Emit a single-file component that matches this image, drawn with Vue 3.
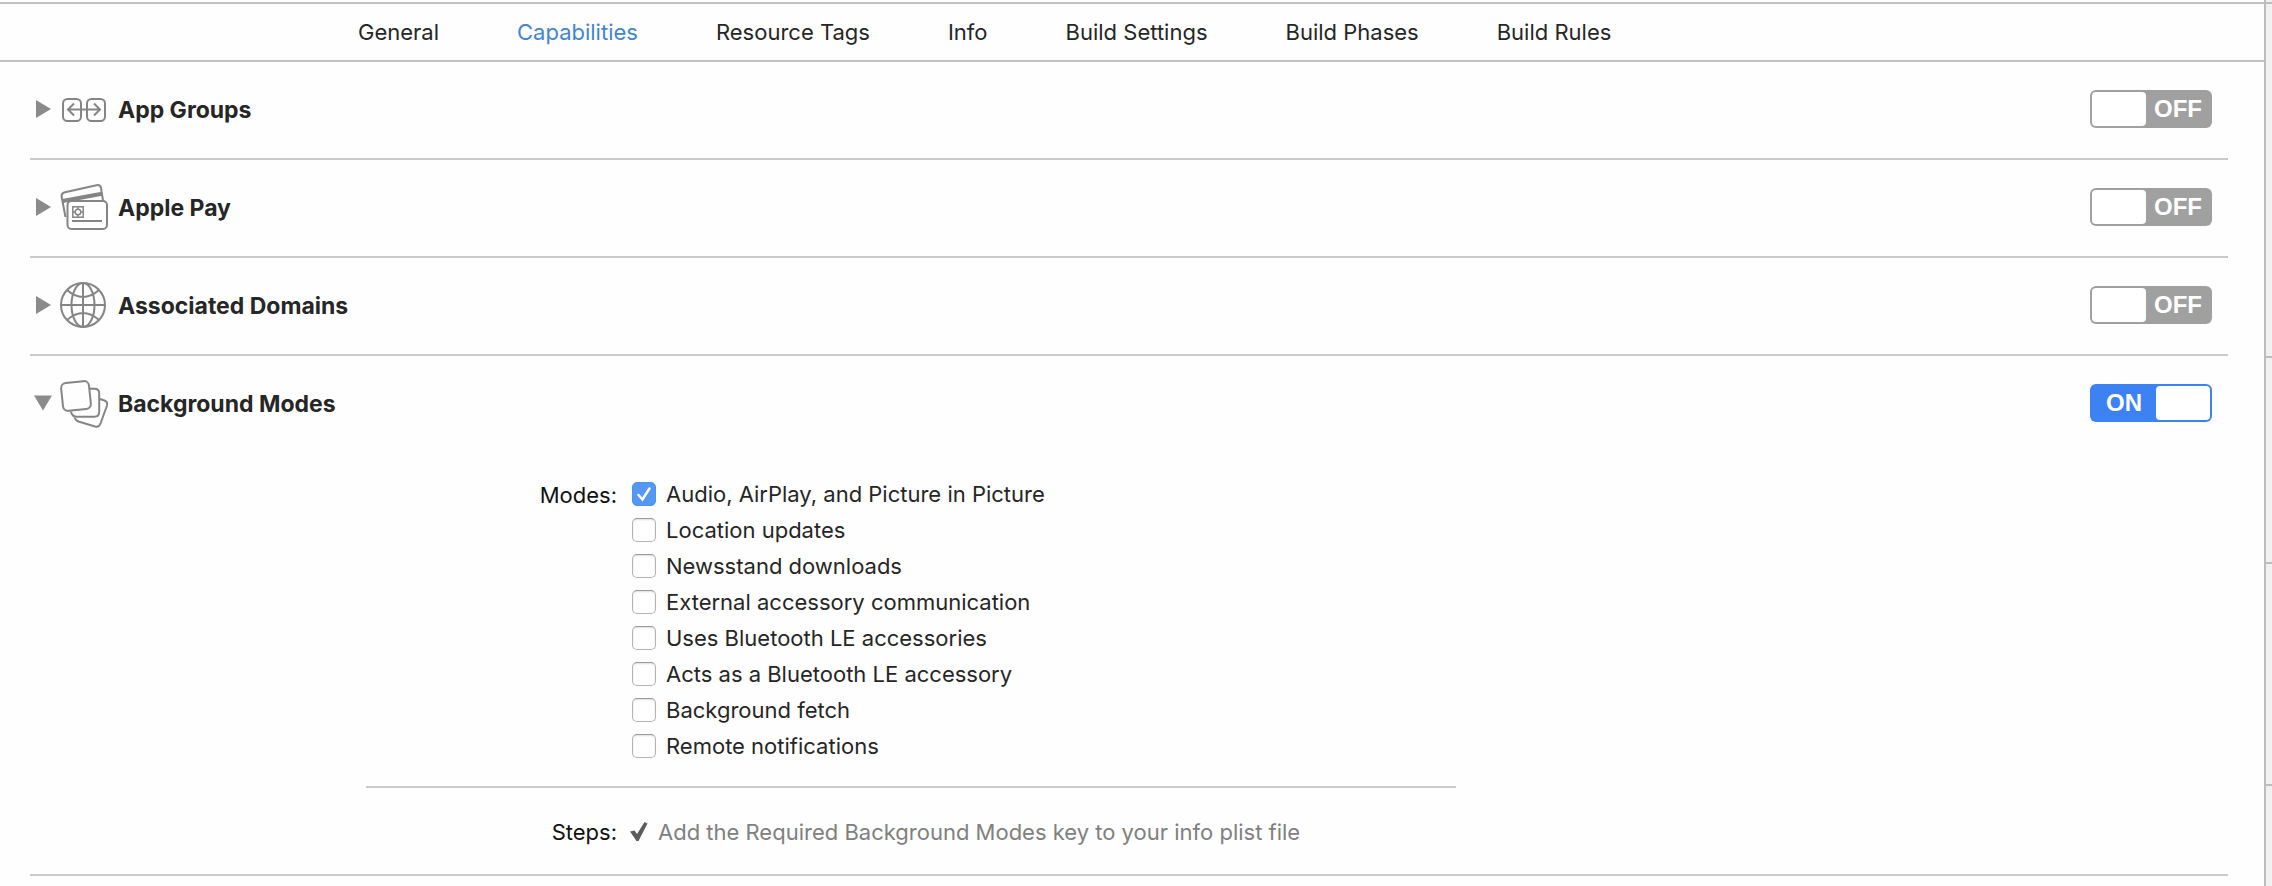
<script setup>
import { ref, reactive } from 'vue'

const tabs = ['General', 'Capabilities', 'Resource Tags', 'Info', 'Build Settings', 'Build Phases', 'Build Rules']
const activeTab = ref('Capabilities')

const capabilities = reactive([
  { id: 'groups', title: 'App Groups', open: false, on: false },
  { id: 'pay', title: 'Apple Pay', open: false, on: false },
  { id: 'domains', title: 'Associated Domains', open: false, on: false },
  { id: 'background', title: 'Background Modes', open: true, on: true },
])

const modes = reactive([
  { label: 'Audio, AirPlay, and Picture in Picture', checked: true },
  { label: 'Location updates', checked: false },
  { label: 'Newsstand downloads', checked: false },
  { label: 'External accessory communication', checked: false },
  { label: 'Uses Bluetooth LE accessories', checked: false },
  { label: 'Acts as a Bluetooth LE accessory', checked: false },
  { label: 'Background fetch', checked: false },
  { label: 'Remote notifications', checked: false },
])
</script>

<template>
  <div class="window">
    <main class="editor">
      <nav class="tabs" aria-label="Target settings">
        <button
          v-for="tab in tabs"
          :key="tab"
          type="button"
          class="tab"
          :class="{ active: tab === activeTab }"
          @click="activeTab = tab"
        >{{ tab }}</button>
      </nav>

      <section v-for="cap in capabilities" :key="cap.id" class="capability">
        <header class="row">
          <button
            type="button"
            class="disclosure"
            :aria-expanded="cap.open"
            :aria-label="cap.title + ' details'"
            @click="cap.open = !cap.open"
          >
            <svg width="18" height="18" viewBox="0 0 18 18" aria-hidden="true">
              <path v-if="cap.open" d="M0 1.5H18L9 16.5Z" fill="#8b8b8b" />
              <path v-else d="M2 0L17 9L2 18Z" fill="#8b8b8b" />
            </svg>
          </button>

          <svg class="icon" viewBox="0 -2 50 50" aria-hidden="true">
            <g v-if="cap.id === 'groups'">
              <rect x="3" y="13" width="18" height="22" rx="4.5" />
              <rect x="27" y="13" width="18" height="22" rx="4.5" />
              <path d="M8 23.5H40M14 17.5L8 23.5L14 29.5M34 17.5L40 23.5L34 29.5" />
            </g>
            <g v-else-if="cap.id === 'pay'">
              <path d="M5.5 33L1.7 13Q1 9 5 8.200L36.500 1.200Q40.300 .5 41 4L43 16.500" />
              <path class="stripe" d="M2.500 17L42 9.800" />
              <rect class="solid" x="7.500" y="17" width="39.500" height="28" rx="4" />
              <rect class="thin" x="12.800" y="22.800" width="10.400" height="10.400" />
              <circle class="thin" cx="18" cy="28" r="2.800" />
              <path class="thin" d="M18 22.800V25.200M18 30.800V33.200M12.800 28H15.200M20.800 28H23.200" />
              <path d="M12 37H42" />
            </g>
            <g v-else-if="cap.id === 'domains'">
              <circle cx="23" cy="23" r="22" />
              <ellipse cx="23" cy="23" rx="11.500" ry="22" />
              <path d="M23 1V45M1 23H45M7 8Q23 22 39 8M7 38Q23 24 39 38" />
            </g>
            <g v-else>
              <path d="M40 19L44.500 20.500Q48 22 47 25.500L40.500 43.500Q39 47.500 35 46.500L18.500 41.500Q15.500 40.500 14.500 37.500" />
              <path d="M30 8.800H34.500Q39.200 8.800 39.200 13.500V32Q39.200 36.700 34.500 36.700H16.500Q12 36.700 11 31.500" />
              <rect class="solid" x="2" y="2" width="28" height="28" rx="5" transform="rotate(-6 16 16)" />
            </g>
          </svg>

          <h2 class="title">{{ cap.title }}</h2>

          <button
            type="button"
            role="switch"
            class="switch"
            :class="{ on: cap.on }"
            :aria-checked="cap.on"
            :aria-label="cap.title"
            @click="cap.on = !cap.on"
          >
            <span class="state">{{ cap.on ? 'ON' : 'OFF' }}</span>
            <span class="knob"></span>
          </button>
        </header>

        <div v-if="cap.id === 'background' && cap.open" class="details">
          <div class="setting" role="group" aria-labelledby="modes-label">
            <span id="modes-label" class="setting-label">Modes:</span>
            <ul class="modes">
              <li v-for="mode in modes" :key="mode.label">
                <label class="mode">
                  <span class="box">
                    <input v-model="mode.checked" type="checkbox" />
                    <svg v-if="mode.checked" width="24" height="24" viewBox="0 0 24 24" aria-hidden="true">
                      <path d="M6.500 13L10.500 17.500L17.500 6.500" />
                    </svg>
                  </span>
                  {{ mode.label }}
                </label>
              </li>
            </ul>
          </div>

          <div class="setting steps">
            <span class="setting-label">Steps:</span>
            <p class="step">
              <svg width="18" height="20" viewBox="0 0 18 20" aria-hidden="true">
                <path d="M0 9.500L4.500 8.500L7 12L14.500 0L17.500 1.500L8.500 19H6.500Z" fill="#5c5c5c" />
              </svg>
              Add the Required Background Modes key to your info plist file
            </p>
          </div>
        </div>
      </section>
    </main>

    <aside class="inspector" aria-label="Inspector">
      <div class="pane first"></div>
      <div class="pane second"></div>
      <div class="pane third"></div>
      <div class="pane rest"></div>
    </aside>
  </div>
</template>

<style>
body {
  margin: 0;
  background: #fff;
}
</style>

<style scoped>
.window {
  display: flex;
  min-height: 100vh;
  background: #fefefe;
  color: #262626;
  font-family: Inter, "Liberation Sans", sans-serif;
  font-size: 22px;
  line-height: 26px;
}

button {
  margin: 0;
  padding: 0;
  border: 0;
  background: none;
  color: inherit;
  font: inherit;
  cursor: pointer;
}

.editor {
  flex: 1;
  min-width: 0;
  padding-top: 2px;
}

.tabs {
  display: flex;
  align-items: center;
  gap: 78px;
  height: 56px;
  padding-left: 358px;
  border-top: 2px solid #c0c0c0;
  border-bottom: 2px solid #c0c0c0;
}

.tab {
  white-space: nowrap;
}

.tab.active {
  color: #4485d0;
}

.capability {
  margin: 0 36px 0 30px;
  border-bottom: 2px solid #cbcbcb;
}

.row {
  display: flex;
  align-items: center;
  height: 94px;
  padding-bottom: 2px;
}

.disclosure {
  display: flex;
  width: 30px;
  padding-left: 4px;
  box-sizing: border-box;
}

.icon {
  width: 50px;
  height: 50px;
  overflow: visible;
  fill: none;
  stroke: #858585;
  stroke-width: 2;
}

.icon .solid {
  fill: #fefefe;
}

.icon .stripe {
  stroke-width: 4;
}

.icon .thin {
  stroke-width: 1.500;
}

.title {
  flex: 1;
  margin: 0;
  padding: 1px 0 0 8px;
  font-size: 23px;
  font-weight: 650;
}

.switch {
  display: flex;
  align-items: center;
  width: 122px;
  height: 38px;
  margin-right: 16px;
  padding: 2px;
  box-sizing: border-box;
  flex-direction: row-reverse;
  border-radius: 6px;
  background: #a0a0a0;
  color: #fff;
  font-family: "Liberation Sans", Arial, sans-serif;
  font-size: 24px;
  font-weight: 700;
}

.switch.on {
  flex-direction: row;
  background: #3c82f2;
}

.state {
  flex: 1;
  text-align: center;
}

.knob {
  width: 54px;
  height: 34px;
  border-radius: 4px;
  background: #fff;
}

.details {
  max-width: 1090px;
  margin-left: 336px;
  padding: 24px 0 29px;
}

.setting {
  display: grid;
  grid-template-columns: 251px 1fr;
  column-gap: 15px;
}

.setting-label {
  padding-top: 6px;
  color: #111;
  text-align: right;
}

.modes {
  margin: 0;
  padding: 0 0 22px;
  list-style: none;
}

.mode {
  display: flex;
  align-items: center;
  gap: 10px;
  width: fit-content;
  height: 36px;
}

.box {
  display: grid;
}

.box input,
.box svg {
  grid-area: 1 / 1;
}

.box input {
  width: 24px;
  height: 24px;
  margin: 0;
  appearance: none;
  border: 1px solid #b4b4b4;
  border-top-color: #999;
  border-radius: 5px;
  background: #fff;
  box-shadow: inset 0 1px 2px #ddd;
}

.box input:checked {
  border-color: #4c92f0;
  background: #5598f3;
  box-shadow: none;
}

.box svg {
  fill: none;
  stroke: #fff;
  stroke-width: 2.500;
  stroke-linecap: round;
  pointer-events: none;
}

.steps {
  padding-top: 31px;
  border-top: 2px solid #cbcbcb;
}

.steps .setting-label {
  padding-top: 0;
}

.step {
  display: flex;
  align-items: center;
  gap: 10px;
  margin: 0;
  margin-left: -2px;
  color: #808080;
}

.inspector {
  display: flex;
  flex-direction: column;
  width: 6px;
  padding-top: 2px;
  border-left: 2px solid #bcbcbc;
  background: #f1f1f1;
}

.pane {
  border-top: 2px solid #bcbcbc;
}

.first {
  height: 352px;
}

.second {
  height: 204px;
}

.third {
  height: 220px;
}

.rest {
  flex: 1;
}
</style>
